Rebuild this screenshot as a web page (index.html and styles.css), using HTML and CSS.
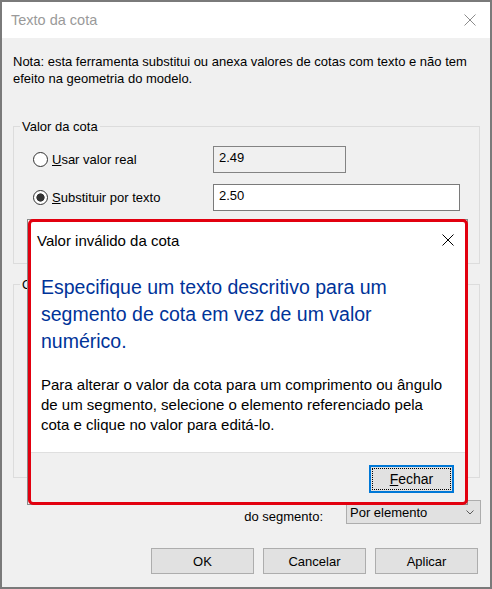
FILE: index.html
```html
<!DOCTYPE html>
<html lang="pt">
<head>
<meta charset="utf-8">
<title>Texto da cota</title>
<link rel="stylesheet" href="styles.css">
</head>
<body>
<div class="window">
  <div class="titlebar">
    <span class="title">Texto da cota</span>
    <svg class="title-close" width="12" height="12" viewBox="0 0 12 12"><path d="M0.5 0.5L11.5 11.5M11.5 0.5L0.5 11.5" stroke="#8c8c8c" stroke-width="1" fill="none"/></svg>
  </div>
  <div class="content">
    <p class="note"><span class="line">Nota: esta ferramenta substitui ou anexa valores de cotas com texto e não tem</span><span class="line">efeito na geometria do modelo.</span></p>
    <div class="group group-value">
      <span class="group-label">Valor da cota</span>
      <div class="row">
        <label class="radio"><span class="radio-dot"></span><span><u>U</u>sar valor real</span></label>
        <div class="textbox textbox-disabled">2.49</div>
      </div>
      <div class="row">
        <label class="radio"><span class="radio-dot radio-checked"></span><span><u>S</u>ubstituir por texto</span></label>
        <div class="textbox textbox-wide">2.50</div>
      </div>
    </div>
    <div class="group group-options">
      <span class="group-label">O</span>
    </div>
    <div class="segment-row">
      <span class="segment-label">do segmento:</span>
      <div class="select"><span>Por elemento</span><svg class="chevron" width="8" height="5" viewBox="0 0 8 5"><path d="M0.5 0.5L4 4L7.5 0.5" stroke="#5a5a5a" stroke-width="1" fill="none"/></svg></div>
    </div>
    <div class="buttons">
      <button class="btn">OK</button>
      <button class="btn">Cancelar</button>
      <button class="btn">Aplicar</button>
    </div>
  </div>

  <div class="modal">
    <div class="modal-title">
      <span>Valor inválido da cota</span>
      <svg width="12" height="12" viewBox="0 0 12 12"><path d="M0.5 0.5L11.5 11.5M11.5 0.5L0.5 11.5" stroke="#000" stroke-width="1" fill="none"/></svg>
    </div>
    <div class="modal-body">
      <p class="instruction"><span class="line">Especifique um texto descritivo para um</span><span class="line">segmento de cota em vez de um valor</span><span class="line">numérico.</span></p>
      <p class="desc"><span class="line">Para alterar o valor da cota para um comprimento ou ângulo</span><span class="line">de um segmento, selecione o elemento referenciado pela</span><span class="line">cota e clique no valor para editá-lo.</span></p>
    </div>
    <div class="modal-footer">
      <button class="btn btn-default"><u>F</u>echar</button>
    </div>
  </div>
</div>
</body>
</html>
```

FILE: styles.css
```css
body {
  margin: 0;
}

.window {
  position: relative;
  width: 492px;
  height: 589px;
  box-sizing: border-box;
  border: 2px solid #7a7a7a;
  background: #f0f0f0;
  font-family: "Liberation Sans", Arial, sans-serif;
  font-size: 13px;
  color: #000;
  overflow: hidden;
}

.line {
  display: block;
  white-space: nowrap;
}

.titlebar {
  height: 36px;
  background: #fff;
  display: flex;
  align-items: center;
  justify-content: space-between;
  padding: 0 14px 0 9px;
}

.title {
  font-size: 14.5px;
  color: #9a9a9a;
}

.content {
  padding: 0 10px 0 11px;
}

.note {
  margin: 15px 0 0;
  line-height: 17px;
}

.group {
  border: 1px solid #dcdcdc;
}

.group-label {
  display: block;
  width: max-content;
  line-height: 17px;
  margin: -9px 0 0 -13px;
  padding: 0 2px;
  background: #f0f0f0;
}

.group-value {
  margin-top: 39px;
  padding: 0 0 52px 19px;
}

.group-options {
  margin-top: 20px;
  height: 194px;
  box-sizing: border-box;
  padding-left: 19px;
}

.row {
  display: grid;
  grid-template-columns: 180px auto;
  align-items: center;
  height: 27px;
  margin-top: 11px;
}

.radio {
  display: flex;
  align-items: center;
  gap: 4px;
}

.radio-dot {
  width: 15px;
  height: 15px;
  box-sizing: border-box;
  border: 1px solid #333;
  border-radius: 50%;
  background: #fff;
}

.radio-checked {
  background: radial-gradient(circle, #333 0 3.8px, #fff 4.4px);
}

.textbox {
  height: 27px;
  box-sizing: border-box;
  border: 1px solid #7a7a7a;
  background: #fff;
  padding: 1px 5px 0;
  line-height: 20px;
}

.textbox-disabled {
  width: 133px;
  background: #f0f0f0;
  border-color: #838383;
}

.textbox-wide {
  width: 247px;
}

.segment-row {
  display: flex;
  justify-content: flex-end;
  align-items: flex-start;
  gap: 23px;
  margin: 22px -1px 0 0;
}

.segment-label {
  line-height: 17px;
  margin-top: 8px;
}

.select {
  width: 135px;
  height: 24px;
  box-sizing: border-box;
  border: 1px solid #adadad;
  background: #e1e1e1;
  display: flex;
  align-items: center;
  justify-content: space-between;
  padding: 0 6px 0 3px;
}

.buttons {
  display: flex;
  justify-content: flex-end;
  gap: 9px;
  margin: 23px 2px 0 0;
}

.btn {
  width: 103px;
  height: 26px;
  box-sizing: border-box;
  border: 1px solid #adadad;
  background: #e1e1e1;
  font-family: inherit;
  font-size: 13px;
  color: #000;
  padding: 0;
}

/* Overlaid message box */
.modal {
  position: absolute;
  left: 25px;
  top: 217px;
  width: 441px;
  height: 286px;
  box-sizing: border-box;
  border: 1px solid #8a8a8a;
  background: #fff;
  display: flex;
  flex-direction: column;
}

.modal::after {
  content: "";
  position: absolute;
  top: -1px;
  left: 0;
  right: -1px;
  bottom: -1px;
  border: 3px solid #e2000f;
  border-radius: 5px;
  pointer-events: none;
}

.modal-title {
  height: 38px;
  box-sizing: border-box;
  padding: 2px 13px 0 9px;
  display: flex;
  align-items: center;
  justify-content: space-between;
  font-size: 15px;
}

.modal-body {
  padding: 0 12px 0 13px;
}

.instruction {
  margin: 16px 0 0;
  font-size: 19.5px;
  line-height: 27px;
  color: #003399;
}

.desc {
  margin: 20px 0 0;
  font-size: 15px;
  line-height: 20px;
}

.modal-footer {
  margin-top: auto;
  height: 52px;
  box-sizing: border-box;
  border-top: 1px solid #dfdfdf;
  background: #f0f0f0;
  display: flex;
  justify-content: flex-end;
  align-items: flex-start;
  padding: 12px 13px 0 0;
}

.btn-default {
  width: 85px;
  height: 28px;
  border: 2px solid #0078d7;
  outline: 1px dotted #000;
  outline-offset: -4px;
  font-size: 14px;
}
```
